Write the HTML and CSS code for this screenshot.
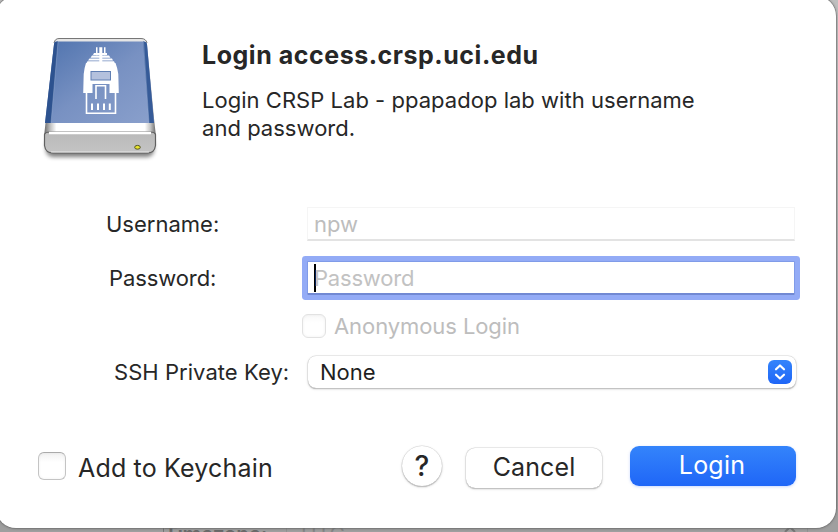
FILE: index.html
```html
<!DOCTYPE html>
<html lang="en">
<head>
<meta charset="utf-8">
<title>Login</title>
<link rel="stylesheet" href="styles.css">
</head>
<body>
<div class="backdrop"><span class="back-label">Timezone:</span><span class="back-select"><span>UTC</span><svg width="16" height="24" viewBox="0 0 16 24"><path d="M3 9l5-5 5 5M3 15l5 5 5-5"/></svg></span></div>
<main class="dialog">
  <header class="intro">
    <svg class="drive" width="126" height="132" viewBox="0 0 126 132">
      <defs>
        <linearGradient id="blue" x1="0" y1="0" x2="1" y2="1"><stop offset="0" stop-color="#4f73ae"/><stop offset=".5" stop-color="#7891c2"/><stop offset="1" stop-color="#8aa0cc"/></linearGradient>
        <linearGradient id="lip"><stop offset="0" stop-color="#666"/><stop offset=".06" stop-color="#c5c5c5"/><stop offset=".11" stop-color="#fff"/><stop offset=".9" stop-color="#fff"/><stop offset=".95" stop-color="#c5c5c5"/><stop offset="1" stop-color="#666"/></linearGradient>
        <linearGradient id="front" x2="0" y2="1"><stop offset="0" stop-color="#b9b9b9"/><stop offset="1" stop-color="#c4c4c4"/></linearGradient>
        <filter id="soft" x="-20%" y="-50%" width="140%" height="220%"><feGaussianBlur stdDeviation="2"/></filter>
      </defs>
      <rect x="9" y="102" width="108" height="19" rx="7" fill="#000" opacity=".5" filter="url(#soft)"/>
      <path d="M20 2.500h85q4 0 5 5l7 75 2 18H7l2-18 8-75q0-5 3-5z" fill="url(#lip)"/>
      <path d="M17 7q1-4.500 5-4.500h82q5 0 6 4.500" fill="#e5e5e5" stroke="#777" stroke-width="1"/>
      <path d="M19 5.500h88q2 0 3 3l7 78.500H8L17 8.500q0-3 2-3z" fill="url(#blue)"/>
      <path d="M17 8.500q0-3 4-3L14 87H8z" fill="#2d528f"/>
      <path d="M106 5.500q4 0 4 3l7 78.500h-5z" fill="#365b98"/>
      <path d="M21 6l-7 81M106.500 6l5.500 81" stroke="#a4b8d8" stroke-width=".8" opacity=".5"/>
      <path d="M7.500 98.500q1-2.500 5-2.500h101q4 0 5 2.500v11q-1 7.500-8 7.500H16q-7.500 0-8.500-7.500z" fill="url(#front)" stroke="#606060" stroke-width="1.200"/>
      <path d="M12 97h102" stroke="#fff" stroke-width="2.500"/>
      <path d="M14 115.800h98" stroke="#ddd" stroke-width="1.200"/>
      <g fill="#fff">
        <path d="M59 11.300h1.500v8H59zM62.300 11.300h3v18h-3zM67 11.300h1.500v8H67z"/>
        <path d="M57 17h13v2H56zM55 19.500l17 0 1.500 2.200h-20zM52.500 22.500h22.500l1 2H51zM50.500 25.200h26.500l.8 1.800H49.500z"/>
        <path d="M49 27h29.500q2 5 2.800 11l.5 19H72.500V48H55.500v9H46.200l.5-19q.6-6 2.300-11z"/>
      </g>
      <rect x="54" y="35.500" width="19.500" height="8.500" fill="#b4c1dd" stroke="#607fb3" stroke-width="1"/>
      <path d="M49.500 56v21.200h29V56M59 63V49.800h9.500V63" fill="none" stroke="#fff" stroke-width="1.600"/>
      <path d="M54 67.500h2v6.500h-2zM60 67.500h2v6.500h-2zM66 67.500h2v6.500h-2zM71.800 67.500h2v6.500h-2z" fill="#fff"/>
      <ellipse cx="100.500" cy="111.300" rx="2.800" ry="1.900" fill="#e8e52c" stroke="#545424" stroke-width="1"/>
    </svg>
    <div class="words">
      <h1>Login access.crsp.uci.edu</h1>
      <p>Login CRSP Lab - ppapadop lab with username<br>and password.</p>
    </div>
  </header>
  <section class="form">
    <span class="label user-label">Username:</span>
    <div class="field">npw</div>
    <span class="label pass-label">Password:</span>
    <div class="field focused"><i class="caret"></i><span>Password</span></div>
    <div class="anonymous"><i class="box small"></i><span>Anonymous Login</span></div>
    <span class="label key-label">SSH Private Key:</span>
    <div class="select"><span>None</span><svg width="24" height="24" viewBox="0 0 24 24"><defs><linearGradient id="btn" x2="0" y2="1"><stop offset="0" stop-color="#3484fb"/><stop offset="1" stop-color="#1f66f7"/></linearGradient></defs><rect width="24" height="24" rx="6" fill="url(#btn)"/><path d="M8 9.300l4-3.800 4 3.800M8 14.700l4 3.800 4-3.800" fill="none" stroke="#fff" stroke-width="2.200" stroke-linecap="round" stroke-linejoin="round"/></svg></div>
  </section>
  <footer class="actions">
    <i class="box"></i><span class="keychain">Add to Keychain</span>
    <span class="help">?</span>
    <span class="button cancel"><span>Cancel</span></span>
    <span class="button login"><span>Login</span></span>
  </footer>
</main>
</body>
</html>
```
FILE: styles.css
```css
* { box-sizing: border-box; }
body {
  margin: 0;
  width: 838px;
  height: 532px;
  overflow: hidden;
  position: relative;
  background: linear-gradient(#c0c0c0, #b5b5b5 50%, #9f9f9f 98%);
  font: 22px/28px Inter, "Liberation Sans", sans-serif;
  color: #272727;
}
svg { display: block; flex: none; }
.backdrop {
  position: absolute;
  left: 0;
  right: 0;
  bottom: -19px;
  height: 32px;
  display: flex;
  padding-left: 163px;
  color: #6a6a6a;
  font-size: 21px;
  line-height: 32px;
}
.back-label { width: 123px; border-left: 1px solid #777; font-weight: 600; letter-spacing: -.4px; }
.back-select {
  display: flex;
  align-items: center;
  justify-content: space-between;
  width: 522px;
  padding: 0 9px 0 14px;
  border-left: 1px solid #929292;
  border-right: 1px solid #929292;
  color: #858585;
}
.back-select svg { fill: none; stroke: #777; stroke-width: 2; }
.dialog {
  position: relative;
  width: 840px;
  height: 532px;
  margin: -4px 0 0 -4px;
  padding: 40px 40px 0 42px;
  border-radius: 20px;
  background: #fff;
  box-shadow: 0 0 0 .5px #777, 0 0 3px rgba(0,0,0,.5);
}
.intro { display: flex; height: 171px; }
.drive { margin-left: -1px; }
.words { padding: 4px 0 0 39px; }
h1 { margin: 0 0 16px; font-size: 25px; line-height: 30px; font-weight: 700; letter-spacing: .53px; white-space: nowrap; }
p { margin: 0; white-space: nowrap; letter-spacing: .03px; }
.form {
  display: grid;
  grid-template-columns: 269px 488px;
  grid-template-rows: 34px 74px 28px 64px;
  height: 239px;
  align-content: start;
}
.label { white-space: nowrap; line-height: 34px; }
.user-label { padding-left: 68px; }
.pass-label { padding: 20px 0 0 71px; letter-spacing: -.1px; }
.key-label { padding: 12px 0 0 76px; letter-spacing: .05px; }
.field {
  height: 34px;
  padding: 0 6px;
  line-height: 32px;
  color: #bdbdbd;
  border: 1px solid #f5f5f5;
  border-bottom: 2px solid #e3e3e3;
}
.focused {
  display: flex;
  align-items: center;
  height: 34px;
  margin-top: 20px;
  padding: 0 6px;
  color: #c2c2c2;
  border: 1px solid #809be8;
  border-bottom: 2px solid #7189d3;
  box-shadow: 0 0 0 5px #93abf6;
  border-radius: 1px;
  letter-spacing: -.2px;
}
.focused span { padding-top: 1px; }
.caret { width: 2px; height: 28px; margin-right: -2px; background: #000; }
.anonymous { grid-column: 2; display: flex; align-items: center; height: 24px; margin: -1px 0 0 -5px; color: #bdbdbd; letter-spacing: -.08px; }
.anonymous span { margin-left: 8px; }
.box {
  width: 28px;
  height: 28px;
  flex: none;
  border: 1px solid #c4c4c4;
  border-top-color: #aaa;
  border-radius: 6px;
  background: linear-gradient(#f1f1f1, #fff 35%);
  box-shadow: inset 0 0 3px rgba(0,0,0,.06);
}
.small { width: 24px; height: 24px; border-color: #e2e2e2; background: linear-gradient(#f8f8f8, #fff 35%); }
.select {
  display: flex;
  align-items: center;
  justify-content: space-between;
  width: 488px;
  height: 32px;
  margin: 13px 0 0 1px;
  padding: 0 4px 0 12px;
  border-radius: 8px;
  box-shadow: 0 0 0 .5px #d5d5d5, 0 1px 1px #aaa, 0 1px 3px rgba(0,0,0,.15);
  color: #1f1f1f;
}
.actions { display: flex; font-size: 25px; line-height: 40px; white-space: nowrap; }
.actions .box { margin-top: 6px; }
.keychain { width: 336px; padding: 2px 0 0 12px; letter-spacing: .18px; }
.help {
  width: 40px;
  height: 40px;
  border-radius: 50%;
  text-align: center;
  font-size: 28px;
  font-weight: 500;
  box-shadow: 0 0 0 .5px #d5d5d5, 0 1px 1px #aaa, 0 1px 3px rgba(0,0,0,.15);
}
.button { height: 40px; border-radius: 9px; text-align: center; line-height: 38px; }
.cancel { width: 136px; margin: 2px 0 0 24px; letter-spacing: .1px; box-shadow: 0 0 0 .5px #d5d5d5, 0 1px 1px #aaa, 0 1px 3px rgba(0,0,0,.15); }
.login { width: 166px; margin-left: 28px; padding-right: 2px; letter-spacing: .2px; color: #fff; background: linear-gradient(#3484fb, #1f66f7); box-shadow: 0 1px 3px rgba(40,100,250,.25); }
```
